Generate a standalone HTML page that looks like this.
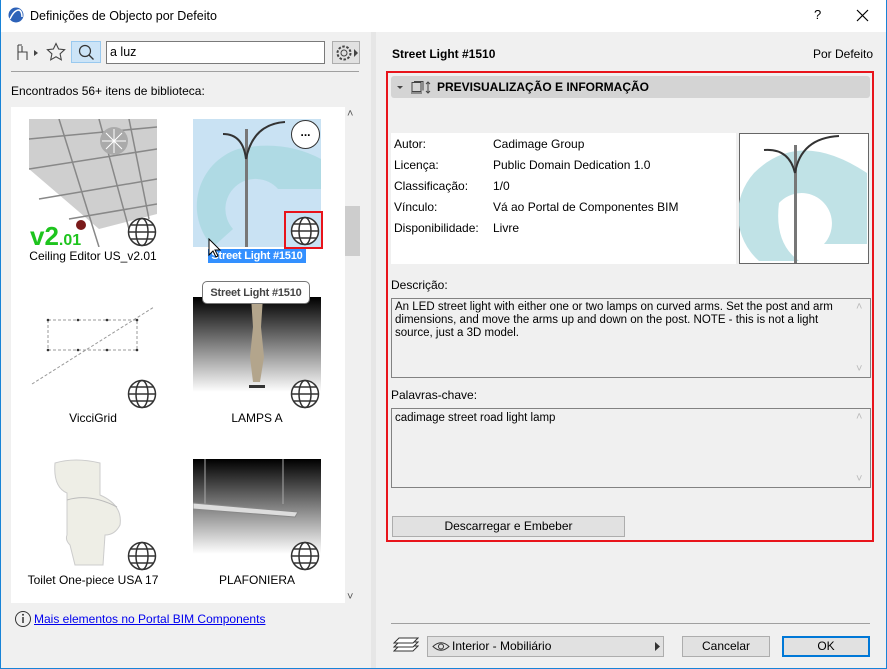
<!DOCTYPE html>
<html><head><meta charset="utf-8">
<style>
*{box-sizing:border-box;margin:0;padding:0}
body{width:887px;height:669px;overflow:hidden;background:#f0f0f0;font-family:"Liberation Sans",sans-serif;font-size:12px;color:#000;position:relative}
.a{position:absolute}
.t{position:absolute;white-space:nowrap;line-height:14px}
.globe{position:absolute;width:30px;height:30px}
.lbl{position:absolute;width:164px;text-align:center;font-size:12px;line-height:14px}
.btn{position:absolute;background:#e1e1e1;border:1px solid #adadad;text-align:center;line-height:19px}
</style></head><body>
<svg width="0" height="0" style="position:absolute"><defs>
<symbol id="g" viewBox="0 0 30 30"><g fill="none" stroke="#333" stroke-width="1.5"><circle cx="15" cy="15" r="13.5" fill="#fff"/><ellipse cx="15" cy="15" rx="6" ry="13.5"/><line x1="1.5" y1="15" x2="28.5" y2="15"/><path d="M4 8h22M4 22h22"/></g></symbol>
<linearGradient id="bk" x1="0" y1="0" x2="0" y2="1"><stop offset="0" stop-color="#000"/><stop offset="1" stop-color="#fff"/></linearGradient>
</defs></svg>
<!-- title bar -->
<div class="a" style="left:0;top:0;width:887px;height:32px;background:#fff"></div>
<svg class="a" style="left:8px;top:7px" width="16" height="16"><circle cx="8" cy="8" r="7.5" fill="#2d62b8"/><path d="M2 12 Q6 3 11 3 Q14 4 14 10" stroke="#fff" stroke-width="1.5" fill="none"/></svg>
<div class="t" style="left:30px;top:9px;font-size:12.5px">Definições de Objecto por Defeito</div>
<div class="t" style="left:814px;top:8px;font-size:13px">?</div>
<svg class="a" style="left:856px;top:9px" width="13" height="13"><path d="M1 1L12 12M12 1L1 12" stroke="#000" stroke-width="1.2"/></svg>
<div class="a" style="left:0;top:0;width:1px;height:669px;background:#1883d7"></div>
<div class="a" style="left:886px;top:0;width:1px;height:669px;background:#1883d7"></div>
<div class="a" style="left:0;top:668px;width:887px;height:1px;background:#1883d7"></div>
<!-- toolbar -->
<svg class="a" style="left:16px;top:44px" width="24" height="18"><g fill="none" stroke="#444" stroke-width="1.1"><path d="M2 1v15M2 8h9v8M6 8V2M2 1h4"/></g><path d="M18 6l4 3-4 3z" fill="#444"/></svg>
<svg class="a" style="left:46px;top:42px" width="20" height="20"><path d="M10 1.5l2.6 5.5 6 .7-4.5 4.1 1.2 6-5.3-3-5.3 3 1.2-6-4.5-4.1 6-.7z" fill="none" stroke="#444" stroke-width="1.1"/></svg>
<div class="a" style="left:71px;top:41px;width:30px;height:22px;background:#cce4f7;border:1px solid #99c9ef"></div>
<svg class="a" style="left:77px;top:44px" width="18" height="18"><circle cx="8" cy="7" r="5.5" fill="none" stroke="#333" stroke-width="1.2"/><path d="M12 11l4.5 4.5" stroke="#333" stroke-width="1.3"/></svg>
<div class="a" style="left:106px;top:41px;width:219px;height:23px;background:#fff;border:1px solid #7a7a7a"></div>
<div class="t" style="left:110px;top:45px;font-size:12.5px">a luz</div>
<div class="a" style="left:332px;top:41px;width:28px;height:23px;background:#e1e1e1;border:1px solid #adadad"></div>
<svg class="a" style="left:335px;top:44px" width="24" height="18"><circle cx="9" cy="9" r="3" fill="none" stroke="#444"/><circle cx="9" cy="9" r="6.5" fill="none" stroke="#444" stroke-dasharray="2.5 1.6" stroke-width="2"/><path d="M19 5l4 4-4 4z" fill="#444"/></svg>
<div class="a" style="left:11px;top:71px;width:348px;height:1px;background:#a0a0a0"></div>
<div class="t" style="left:11px;top:84px">Encontrados 56+ itens de biblioteca:</div>
<!-- list -->
<div class="a" style="left:11px;top:107px;width:334px;height:496px;background:#fff"></div>
<div class="t" style="left:347px;top:107px;color:#555;font-size:11px">&#x02C4;</div>
<div class="a" style="left:345px;top:206px;width:15px;height:50px;background:#cdcdcd"></div>
<div class="t" style="left:347px;top:590px;color:#555;font-size:11px">&#x02C5;</div>
<!-- item 1 ceiling -->
<svg class="a" style="left:29px;top:119px" width="128" height="128">
<rect width="128" height="128" fill="#fff"/>
<path d="M0 0H128V95L70 110 0 50Z" fill="#cfcfcf"/>
<g stroke="#888" stroke-width="1.5" fill="none"><path d="M0 20L128 8M0 50L128 30M10 80L128 60M40 100L128 85M30 0L70 128M70 0L100 110M100 0L120 100"/></g>
<circle cx="85" cy="22" r="14" fill="#aaa"/><g stroke="#fff"><path d="M85 10v24M73 22h24M77 14l16 16M93 14L77 30"/></g>
<circle cx="52" cy="106" r="5" fill="#7a1a1a"/>
<text x="1" y="126" font-family="Liberation Sans" font-weight="bold" font-size="26" fill="#1ec41e">v2<tspan font-size="16">.01</tspan></text>
</svg>
<svg class="globe" style="left:127px;top:217px"><use href="#g"/></svg>
<div class="lbl" style="left:11px;top:249px">Ceiling Editor US_v2.01</div>
<!-- item 2 street light -->
<svg class="a" style="left:193px;top:119px" width="128" height="128">
<rect width="128" height="128" fill="#c9e2f3"/>
<path d="M20 128 A60 60 0 0 1 45 30 Q90 20 128 40 V70 H85 A30 30 0 0 0 40 110 Z" fill="#a9d8e0" opacity=".8"/>
<rect x="52" y="10" width="3" height="118" fill="#777"/>
<path d="M53 40 Q50 15 30 15 M53 40 Q60 5 92 3" stroke="#333" stroke-width="2" fill="none"/>
</svg>
<div class="a" style="left:291px;top:120px;width:29px;height:29px;border-radius:50%;background:#fff;border:1.5px solid #333;text-align:center;font-weight:bold;line-height:22px">...</div>
<svg class="globe" style="left:290px;top:216px"><use href="#g"/></svg>
<div class="a" style="left:284px;top:211px;width:39px;height:38px;border:2px solid #e8141b"></div>
<div class="a" style="left:208px;top:249px;width:98px;height:14px;background:#3390ff"></div>
<div class="t" style="left:208px;top:249px;color:#fff;font-weight:bold;width:98px;text-align:center;font-size:11px;letter-spacing:-0.2px">Street Light #1510</div>
<svg class="a" style="left:208px;top:238px" width="14" height="22"><path d="M1 1v16l4-4 3 6 2-1-3-6h5z" fill="#fff" stroke="#000"/></svg>
<!-- row 2 -->
<svg class="a" style="left:29px;top:299px" width="128" height="90"><g stroke="#999" stroke-dasharray="3 2" fill="none"><rect x="19" y="21" width="89" height="30"/><path d="M3 85L125 8"/></g><g fill="#333"><circle cx="19" cy="21" r="1.3"/><circle cx="49" cy="21" r="1.3"/><circle cx="78" cy="21" r="1.3"/><circle cx="108" cy="21" r="1.3"/><circle cx="19" cy="51" r="1.3"/><circle cx="49" cy="51" r="1.3"/><circle cx="78" cy="51" r="1.3"/><circle cx="108" cy="51" r="1.3"/></g></svg>
<svg class="globe" style="left:127px;top:379px"><use href="#g"/></svg>
<div class="lbl" style="left:11px;top:411px">VicciGrid</div>
<svg class="a" style="left:193px;top:297px" width="128" height="95"><rect width="128" height="95" fill="url(#bk)"/><path d="M58 0h12l-2 30 3 30-4 25h-7l-3-25 3-30z" fill="#b3a58c"/><rect x="56" y="88" width="16" height="3" fill="#333"/></svg>
<svg class="globe" style="left:290px;top:379px"><use href="#g"/></svg>
<div class="lbl" style="left:175px;top:411px">LAMPS A</div>
<!-- tooltip (on top) -->
<div class="a" style="left:202px;top:281px;width:108px;height:23px;background:#fff;border:1px solid #767676;border-radius:5px"></div>
<div class="t" style="left:202px;top:286px;width:108px;text-align:center;color:#444;font-weight:bold;font-size:11px;letter-spacing:-0.2px">Street Light #1510</div>
<!-- row 3 -->
<svg class="a" style="left:45px;top:455px" width="80" height="120"><path d="M10 8Q30 2 55 8V40Q78 50 75 70Q70 80 60 80L58 110H30L25 90Q20 85 22 80V38Q8 32 10 8Z" fill="#eeeee6" stroke="#ccc"/><path d="M22 45Q45 38 72 52" stroke="#bbb" fill="none"/></svg>
<svg class="globe" style="left:127px;top:541px"><use href="#g"/></svg>
<div class="lbl" style="left:11px;top:573px">Toilet One-piece USA 17</div>
<svg class="a" style="left:193px;top:459px" width="128" height="95"><rect width="128" height="95" fill="url(#bk)"/><path d="M12 0v45M90 0v45" stroke="#aaa"/><path d="M0 44L105 53 102 58 0 50Z" fill="#ddd" stroke="#888"/></svg>
<svg class="globe" style="left:290px;top:541px"><use href="#g"/></svg>
<div class="lbl" style="left:175px;top:573px">PLAFONIERA</div>
<!-- link -->
<svg class="a" style="left:14px;top:610px" width="18" height="18"><circle cx="9" cy="9" r="7.5" fill="none" stroke="#333"/><path d="M9 7v6" stroke="#333" stroke-width="1.5"/><circle cx="9" cy="4.8" r="1" fill="#333"/></svg>
<div class="t" style="left:34px;top:612px;color:#0000ee;text-decoration:underline">Mais elementos no Portal BIM Components</div>
<!-- splitter -->
<div class="a" style="left:371px;top:32px;width:5px;height:636px;background:#e6e6e6"></div>
<!-- right -->
<div class="t" style="left:392px;top:47px;font-weight:bold">Street Light #1510</div>
<div class="t" style="left:813px;top:47px">Por Defeito</div>
<div class="a" style="left:386px;top:71px;width:488px;height:471px;border:2px solid #e8141b"></div>
<div class="a" style="left:391px;top:76px;width:479px;height:22px;background:#d4d4d4;border-radius:3px"></div>
<svg class="a" style="left:396px;top:81px" width="40" height="14"><path d="M1 5h6l-3 3z" fill="#444"/><g fill="none" stroke="#444"><rect x="16" y="1.5" width="9" height="9"/><path d="M18 0.5h9v9M15 12h11"/><path d="M32 1v11M30 3l2-2 2 2M30 10l2 2 2-2"/></g></svg>
<div class="t" style="left:437px;top:80px;font-weight:bold">PREVISUALIZAÇÃO E INFORMAÇÃO</div>
<div class="a" style="left:391px;top:133px;width:345px;height:131px;background:#fff"></div>
<div class="t" style="left:394px;top:137px">Autor:</div><div class="t" style="left:493px;top:137px">Cadimage Group</div>
<div class="t" style="left:394px;top:158px">Licença:</div><div class="t" style="left:493px;top:158px">Public Domain Dedication 1.0</div>
<div class="t" style="left:394px;top:179px">Classificação:</div><div class="t" style="left:493px;top:179px">1/0</div>
<div class="t" style="left:394px;top:200px">Vínculo:</div><div class="t" style="left:493px;top:200px">Vá ao Portal de Componentes BIM</div>
<div class="t" style="left:394px;top:221px">Disponibilidade:</div><div class="t" style="left:493px;top:221px">Livre</div>
<svg class="a" style="left:739px;top:133px" width="130" height="131"><rect x=".5" y=".5" width="129" height="130" fill="#fff" stroke="#666"/><path d="M20 128 A62 62 0 0 1 15 40 Q60 -5 128 40 V111 H85 A28 28 0 0 0 40 70 Q35 110 60 128 Z" fill="#b5dde2" opacity=".85"/><rect x="55" y="12" width="3" height="118" fill="#777"/><path d="M56 40Q50 15 25 17M56 40Q62 5 100 3" stroke="#333" stroke-width="2" fill="none"/></svg>
<div class="t" style="left:391px;top:278px">Descrição:</div>
<div class="a" style="left:391px;top:298px;width:480px;height:80px;border:1px solid #828282;background:#f0f0f0"></div>
<div class="a" style="left:395px;top:301px;width:450px;line-height:13px;font-size:11.5px">An LED street light with either one or two lamps on curved arms. Set the post and arm dimensions, and move the arms up and down on the post. NOTE - this is not a light source, just a 3D model.</div>
<div class="t" style="left:856px;top:300px;color:#bbb;font-size:11px">&#x02C4;</div><div class="t" style="left:856px;top:362px;color:#bbb;font-size:11px">&#x02C5;</div>
<div class="t" style="left:391px;top:388px">Palavras-chave:</div>
<div class="a" style="left:391px;top:408px;width:480px;height:80px;border:1px solid #828282;background:#f0f0f0"></div>
<div class="t" style="left:395px;top:411px;font-size:11.5px">cadimage street road light lamp</div>
<div class="t" style="left:856px;top:410px;color:#bbb;font-size:11px">&#x02C4;</div><div class="t" style="left:856px;top:472px;color:#bbb;font-size:11px">&#x02C5;</div>
<div class="btn" style="left:392px;top:516px;width:233px;height:21px">Descarregar e Embeber</div>
<!-- bottom -->
<div class="a" style="left:391px;top:623px;width:479px;height:1px;background:#a0a0a0"></div>
<svg class="a" style="left:393px;top:637px" width="26" height="20"><g fill="#fff" stroke="#333"><path d="M1 14l5-5h19l-5 5z"/><path d="M1 10l5-5h19l-5 5z"/><path d="M1 6l5-5h19l-5 5z"/></g></svg>
<div class="btn" style="left:427px;top:636px;width:237px;height:21px;text-align:left;padding-left:24px">Interior - Mobiliário</div>
<svg class="a" style="left:432px;top:641px" width="18" height="11"><path d="M1 5.5Q9 -2 17 5.5Q9 13 1 5.5Z" fill="none" stroke="#333"/><circle cx="9" cy="5.5" r="2.5" fill="none" stroke="#333"/></svg>
<svg class="a" style="left:655px;top:642px" width="6" height="9"><path d="M0 0l5 4.5L0 9z" fill="#333"/></svg>
<div class="btn" style="left:682px;top:636px;width:88px;height:21px">Cancelar</div>
<div class="btn" style="left:782px;top:636px;width:88px;height:21px;border:2px solid #0078d7;line-height:17px">OK</div>
</body></html>
